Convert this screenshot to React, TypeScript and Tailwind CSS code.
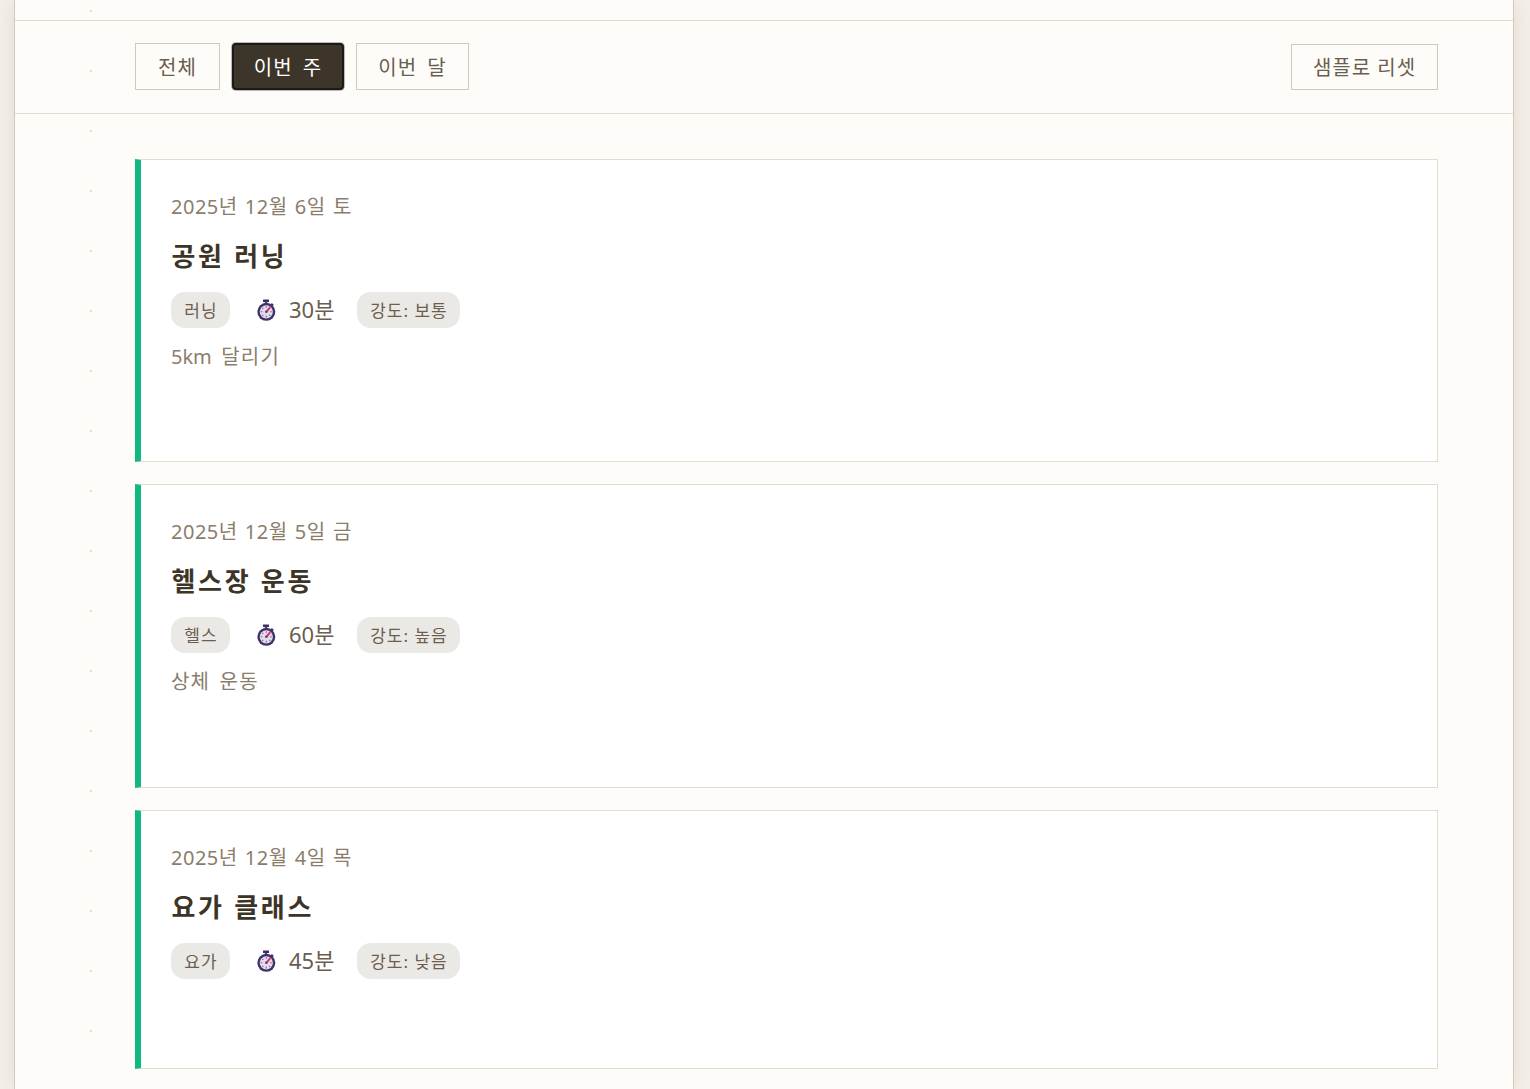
import type { ReactNode } from "react";

const font = { fontFamily: '"Noto Sans", "Noto Sans CJK KR", sans-serif' };

function Stopwatch() {
  return (
    <svg width="20" height="22" viewBox="0 0 20 22" className="shrink-0">
      <rect x="7" y="0.5" width="6" height="2.5" rx="0.5" fill="#3d2c6b" />
      <rect x="8.8" y="3" width="2.4" height="2" fill="#5a4a80" />
      <rect x="15" y="4.5" width="2.5" height="2" fill="#3d2c6b" transform="rotate(40 16 5.5)" />
      <circle cx="10.3" cy="12.8" r="9" fill="#3f3268" />
      <circle cx="10.3" cy="12.8" r="6.6" fill="#e4dbe9" />
      <path d="M10.3 7.2v1.6M10.3 16.8v1.6M4.7 12.8h1.6M14.3 12.8h1.6M6.3 8.8l1 1M14.3 16.8l-1-1M6.3 16.8l1-1" stroke="#77689a" strokeWidth="1.1" />
      <path d="M10.3 12.8 L14.3 8.2" stroke="#e8286a" strokeWidth="2" />
      <circle cx="10.3" cy="12.8" r="1.3" fill="#6b3a7c" />
    </svg>
  );
}

function Card({ date, title, tag, mins, level, note, h }: { date: string; title: string; tag: string; mins: string; level: string; note?: ReactNode; h: string }) {
  return (
    <div className={`border border-[#e3dad0] border-l-[6px] border-l-[#10b981] bg-white pl-[30px] pt-[33px] ${h}`}>
      <div className="h-[28px] text-[20px] leading-[28px] tracking-[0.5px] text-[#8b7d6b] [word-spacing:1.5px]">{date}</div>
      <div className="mt-[17px] h-[36px] pl-[0.5px] text-[26px] font-bold leading-[36px] tracking-[2.7px] text-[#3d3428]">{title}</div>
      <div className="mt-[17px] flex h-[37px] items-center">
        <span className="flex h-[36px] w-[59px] items-center justify-center rounded-[14px] bg-[#ebe9e6] pl-[1px] pt-[2px] text-[17px] tracking-[1px] text-[#6b5d4f]">{tag}</span>
        <span className="ml-[26px] flex w-[101px] items-center text-[22px] text-[#6b5d4f]">
          <Stopwatch />
          <span className="ml-[13px]">{mins}</span>
        </span>
        <span className="flex h-[36px] w-[103px] items-center justify-center rounded-[14px] bg-[#ebe9e6] pl-[1px] pt-[2px] text-[17px] tracking-[1px] text-[#6b5d4f]">{level}</span>
      </div>
      {note && <div className="mt-[15px] h-[28px] text-[20px] leading-[28px] tracking-[1.2px] text-[#8b7d6b] [word-spacing:3px]">{note}</div>}
    </div>
  );
}

function FilterButton({ label, w }: { label: string; w: string }) {
  return (
    <button className={`h-[47px] border border-[#d4c8bc] bg-transparent pt-[2px] text-[20px] tracking-[1px] text-[#6b5d4f] [word-spacing:4px] ${w}`}>{label}</button>
  );
}

export default function App() {
  return (
    <div style={font} className="h-[1089px] w-full overflow-hidden bg-[#f4f0e9]">
      <div className="relative mx-[14px] h-[1089px] w-[1500px] border-x border-[#d4c8bc] bg-[#fdfcf8] shadow-[0_0_20px_rgba(90,85,60,0.12)]">
        <div aria-hidden className="absolute left-[75px] top-0 h-full w-[2px] bg-[linear-gradient(180deg,transparent_10px,#e3dad0_10px,#e3dad0_12px,transparent_12px)] bg-[length:2px_60px]" />
        <div className="h-[21px] border-b border-[#e3dad0]" />
        <div className="relative flex h-[93px] items-start justify-between border-b border-[#e3dad0] pl-[120px] pr-[75px] pt-[22px]">
          <div className="flex items-center gap-[12px]">
            <FilterButton label="전체" w="w-[85px]" />
            <button className="h-[47px] w-[112px] rounded-[4px] border-2 border-[#1a1a1a] bg-[#3d3529] pt-[2px] text-[20px] tracking-[1px] text-white shadow-[0_0_0_1px_rgba(60,60,60,0.35)] [word-spacing:4px]">이번 주</button>
            <FilterButton label="이번 달" w="w-[113px]" />
          </div>
          <button className="mt-[1px] h-[46px] w-[147px] border border-[#d4c8bc] bg-transparent pt-[1px] text-[20px] tracking-[1px] text-[#6b5d4f]">샘플로 리셋</button>
        </div>
        <div className="relative flex flex-col gap-[22px] pl-[120px] pr-[75px] pt-[45px]">
          <Card h="h-[303px]" date="2025년 12월 6일 토" title="공원 러닝" tag="러닝" mins="30분" level="강도: 보통" note={<><span className="tracking-normal">5km</span> 달리기</>} />
          <Card h="h-[304px]" date="2025년 12월 5일 금" title="헬스장 운동" tag="헬스" mins="60분" level="강도: 높음" note="상체 운동" />
          <Card h="h-[259px]" date="2025년 12월 4일 목" title="요가 클래스" tag="요가" mins="45분" level="강도: 낮음" />
        </div>
      </div>
    </div>
  );
}
